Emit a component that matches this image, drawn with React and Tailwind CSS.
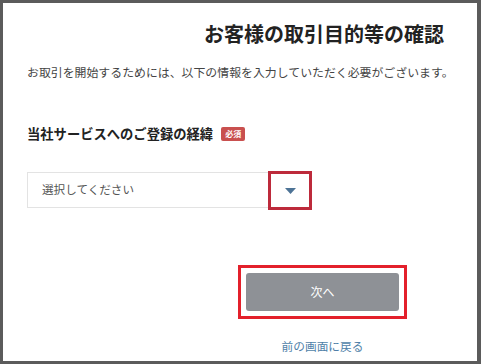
import React from "react";

const font = { fontFamily: '"Noto Sans CJK JP", "Noto Sans", sans-serif' };

const App = () => {
  return (
    <div
      className="w-[481px] h-[364px] bg-[#5b5b5b] pt-[3px] pl-[3px] pr-[4px] pb-[3px]"
      style={font}
    >
      <div className="h-full bg-white pl-[24px] pr-[33px] pt-[16px]">
        {/* Title */}
        <h1 className="text-right text-[20px] leading-[30px] font-bold text-[#222]">
          お客様の取引目的等の確認
        </h1>
        <p className="mt-[14px] text-[11.9px] leading-[18px] text-[#444] whitespace-nowrap">
          お取引を開始するためには、以下の情報を入力していただく必要がございます。
        </p>

        {/* Field label */}
        <div className="mt-[43px] flex items-center h-[20px]">
          <span className="text-[13.3px] font-bold text-[#222]">
            当社サービスへのご登録の経緯
          </span>
          <span className="ml-[8px] bg-[#c9504f] text-white text-[8px] leading-[14px] px-[4px] rounded-[2px] font-bold">
            必須
          </span>
        </div>

        {/* Select */}
        <div className="relative mt-[28px] w-[283px] h-[36px] border border-[#e3e3e3] flex items-center pl-[14px]">
          <span className="text-[11.6px] text-[#555]">選択してください</span>
          <div className="absolute right-[-3px] top-[-2px] w-[44px] h-[39px] border-[3px] border-[#bd2a3b] flex items-center justify-center">
            <svg width="11" height="6" viewBox="0 0 11 6">
              <path d="M0 0 L11 0 L5.5 6 Z" fill="#4d7396" />
            </svg>
          </div>
        </div>

        {/* Actions */}
        <div className="flex justify-end pr-[37px] mt-[57px]">
          <div className="flex flex-col items-center">
            <div className="border-[3px] border-[#e3202b] p-[5px]">
              <button className="w-[153px] h-[38px] bg-[#8e9196] rounded-[3px] text-white text-[12px]">
                次へ
              </button>
            </div>
            <a className="mt-[18px] text-[11.7px] leading-[18px] text-[#4f7fa8]">
              前の画面に戻る
            </a>
          </div>
        </div>
      </div>
    </div>
  );
};

export default App;
